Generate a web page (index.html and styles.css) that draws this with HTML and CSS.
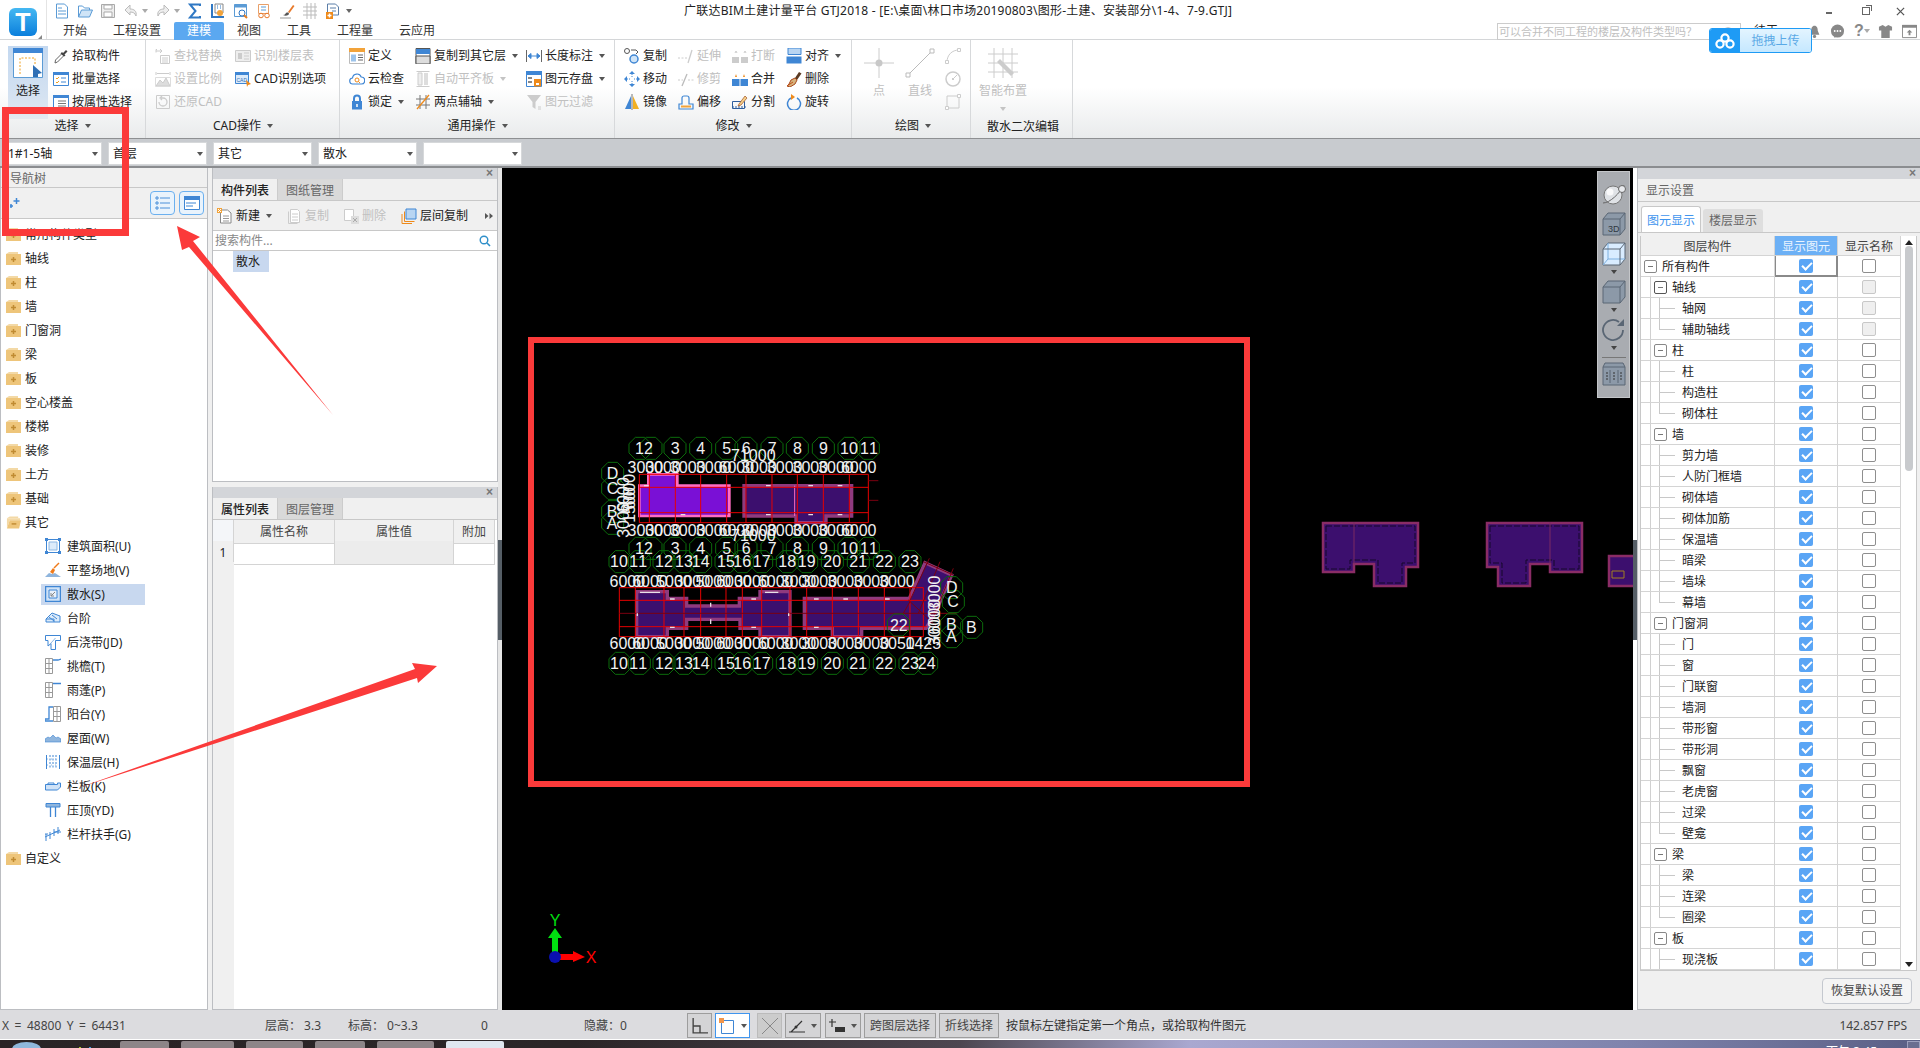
FILE: index.html
```html
<!DOCTYPE html>
<html lang="zh-CN">
<head>
<meta charset="utf-8">
<title>广联达BIM土建计量平台 GTJ2018</title>
<link rel="stylesheet" href="styles.css">
</head>
<body>
<svg class="sprite" aria-hidden="true">
<defs>
<symbol id="qnew" viewBox="0 0 16 16"><path d="M2.5 1h8l3 3v11h-11z" fill="#fff" stroke="#5b9bd5"/><path d="M4 8h8M4 11h8M4 5h4" stroke="#5b9bd5"/></symbol>
<symbol id="qopen" viewBox="0 0 16 16"><path d="M1.5 14V3h4l2 2h5v2" fill="#fff" stroke="#5b9bd5"/><path d="M1.5 14l3-7h11l-3 7z" fill="#cfe4f7" stroke="#5b9bd5"/></symbol>
<symbol id="qsave" viewBox="0 0 16 16"><path d="M1.5 1.5h13v13h-13z" fill="#eee" stroke="#aaa"/><path d="M4 2h8v4H4zM4 9h8v5H4z" fill="#fff" stroke="#aaa"/></symbol>
<symbol id="qundo" viewBox="0 0 16 16"><path d="M7 2L2 7l5 5V9c3 0 5 1 6 4 1-5-2-7-6-7z" fill="#eee" stroke="#bbb"/></symbol>
<symbol id="qredo" viewBox="0 0 16 16"><path d="M9 2l5 5-5 5V9c-3 0-5 1-6 4-1-5 2-7 6-7z" fill="#eee" stroke="#bbb"/></symbol>
<symbol id="qsum" viewBox="0 0 16 16"><path d="M13 3V1.500H3L8.500 8 3 14.500h10V13" fill="none" stroke="#2f78c4" stroke-width="2"/></symbol>
<symbol id="qa" viewBox="0 0 16 16"><path d="M1 15V1h2v12h11v2z" fill="#2f78c4"/><path d="M5 1h8v9H5z" fill="#fff" stroke="#888"/><circle cx="10" cy="10" r="3" fill="#f2a33a"/><path d="M7 3h1M10 3h1M7 5h1M10 5h1" stroke="#2f78c4"/></symbol>
<symbol id="qb" viewBox="0 0 16 16"><path d="M1.500 1.500h12v12h-12z" fill="#fff" stroke="#5b9bd5"/><path d="M1.500 1.500h12v3h-12z" fill="#5b9bd5"/><circle cx="9" cy="10" r="3" fill="#fff" stroke="#2f78c4"/><path d="M11 12l3 3" stroke="#e67e22" stroke-width="2"/></symbol>
<symbol id="qc" viewBox="0 0 16 16"><path d="M2.500 1.500h10v9h-10z" fill="#fff" stroke="#e8a06a"/><path d="M5 4h5M5 7h5" stroke="#5b9bd5"/><circle cx="5" cy="12.500" r="2.300" fill="none" stroke="#e8792a"/><circle cx="11" cy="12.500" r="2.300" fill="none" stroke="#e8792a"/></symbol>
<symbol id="qd" viewBox="0 0 16 16"><path d="M9 9l5-7 1.500 1-5 7z" fill="#e8792a"/><path d="M7 10c2-1 3 0 3 1-1 2-4 2-6 1 2 0 2-1 3-2z" fill="#555"/><path d="M1 15h11" stroke="#999"/></symbol>
<symbol id="qe" viewBox="0 0 16 16"><path d="M1 4h14M1 8h14M1 12h14M5 0v16M9 0v16M13 0v16" stroke="#bbb" fill="none"/></symbol>
<symbol id="qf" viewBox="0 0 16 16"><path d="M2.500 1h8l3 3v8h-11z" fill="#fff" stroke="#5b7ea8"/><path d="M5 5h6M7 8h4" stroke="#5b7ea8"/><path d="M1 9h7v7H1z" fill="#ef8a1a"/><path d="M4.500 10.500v4M2.500 12.500h4" stroke="#fff" stroke-width="1.500"/></symbol>

<symbol id="bigsel" viewBox="0 0 30 30"><path d="M.5.5h29v29H.5z" fill="#fff" stroke="#5b9bd5"/><path d="M0 0h30v5H0z" fill="#3f86d4"/><path d="M7 26V10h15v6" fill="none" stroke="#f0a020" stroke-dasharray="2 1.500"/><path d="M20 17l9 8-4 1v3h-5z" fill="#2f6fb5"/></symbol>
<symbol id="pick" viewBox="0 0 16 16"><path d="M2 15l.5-3L9 5.500 11 7.500 4.500 14z" fill="#fff" stroke="#666"/><path d="M9 4l1 1 3-3 1.500 1.500-3 3 1 1-1.500 1L7.500 5.500z" fill="#444"/></symbol>
<symbol id="batch" viewBox="0 0 16 16"><path d="M.5 1.500h15v13H.5z" fill="#fff" stroke="#3f86d4"/><path d="M0 1h16v3H0z" fill="#3f86d4"/><path d="M3 7l1 1 2-2M3 11l1 1 2-2" fill="none" stroke="#f0a020"/><path d="M8 7h5M8 11h5" stroke="#3f86d4"/></symbol>
<symbol id="attrsel" viewBox="0 0 16 16"><path d="M.5 1.500h15v13H.5z" fill="#fff" stroke="#3f86d4"/><path d="M0 1h16v3H0z" fill="#3f86d4"/><path d="M5 7h8M5 9.500h8M5 12h8" stroke="#777"/></symbol>
<symbol id="dfind" viewBox="0 0 16 16"><path d="M1 3h5M5 1l2 2-2 2M2 1.500h-1v3" stroke="#ccc" fill="none"/><path d="M5.500 7.500h9v8h-9z" fill="#fff" stroke="#ccc"/><path d="M7 10h6M7 12h6M7 14h6" stroke="#ccc"/></symbol>
<symbol id="dscale" viewBox="0 0 16 16"><path d="M1 1v3M15 1v3M2 2.500h12" stroke="#ccc"/><path d="M1 15l4-6 3 3 3-5 4 8z" fill="#ddd" stroke="#ccc"/><path d="M.5 6.500h15v9H.5z" fill="none" stroke="#ddd"/></symbol>
<symbol id="drest" viewBox="0 0 16 16"><path d="M1.500 1.500h13v13h-13z" fill="none" stroke="#ccc"/><path d="M4 8a4 4 0 1 0 4-4H6M7 2L5 4l2 2" fill="none" stroke="#ccc" stroke-width="1.300"/></symbol>
<symbol id="dfloor" viewBox="0 0 16 16"><path d="M.5 2.500h15v11H.5z" fill="#eee" stroke="#ccc"/><path d="M3 5h4v6H3z" fill="#ccc"/><path d="M9 5h5M9 8h5M9 11h5" stroke="#ccc"/></symbol>
<symbol id="cadopt" viewBox="0 0 16 16"><path d="M.5 1.500h13v11H.5z" fill="#dcebfa" stroke="#3f86d4"/><path d="M0 1h14v3H0z" fill="#3f86d4"/><text x="1.500" y="10.500" class="mini">CAD</text><path d="M11 9l5 4-3 1-1 2z" fill="#ef8a1a"/></symbol>
<symbol id="define" viewBox="0 0 16 16"><path d="M.5.500h15v15H.5z" fill="#fff" stroke="#bbb"/><path d="M0 0h16v4H0z" fill="#f2a33a"/><path d="M2 6.500h5v7H2z" fill="#9cc3ea"/><path d="M9 7h5M9 9.500h5M9 12h5" stroke="#666"/></symbol>
<symbol id="cloud" viewBox="0 0 16 16"><path d="M4 13a3 3 0 0 1-.5-6 4.500 4.500 0 0 1 8.700-1 3.500 3.500 0 0 1 0 7z" fill="#fff" stroke="#3f86d4" stroke-width="1.200"/><circle cx="8" cy="9" r="2" fill="none" stroke="#ef8a1a"/><path d="M9.500 10.500l1.500 1.500" stroke="#ef8a1a"/></symbol>
<symbol id="lock" viewBox="0 0 16 16"><path d="M5 8V4.500a3 3 0 0 1 6 0V8" fill="none" stroke="#3f86d4" stroke-width="2"/><path d="M3 7h10v8.500H3z" fill="#3f86d4"/><path d="M8 10v3" stroke="#fff" stroke-width="1.500"/></symbol>
<symbol id="clayer" viewBox="0 0 16 16"><path d="M1 .5h14v15H1z" fill="#fff" stroke="#555"/><path d="M1 1h14v5H1z" fill="#3f86d4"/><path d="M1 8h14v8H1z" fill="#ddd" stroke="#555"/></symbol>
<symbol id="dalign" viewBox="0 0 16 16"><path d="M1.500.5h13M1.500 15.500h13" stroke="#ccc"/><path d="M3 2h4v12H3z" fill="#eee" stroke="#ccc"/><path d="M9 2h4v12H9z" fill="#ddd"/></symbol>
<symbol id="twopt" viewBox="0 0 16 16"><path d="M1 5h14M1 11h14M5 1v14M11 1v14" stroke="#777" fill="none"/><path d="M2 15L14 1" stroke="#ef8a1a" stroke-width="1.300"/></symbol>
<symbol id="dimlen" viewBox="0 0 16 16"><path d="M.5 2v12M15.500 2v12" stroke="#666"/><path d="M2 8h12M2 8l3-2.500v5zM14 8l-3-2.500v5z" fill="#3f86d4" stroke="#3f86d4"/></symbol>
<symbol id="savefig" viewBox="0 0 16 16"><path d="M.5.500h15v15H.5z" fill="#fff" stroke="#3f86d4"/><path d="M0 0h16v4H0z" fill="#3f86d4"/><path d="M2 6h4v2H2zM2 10h4v2H2z" fill="#888"/><path d="M8 8h7v7.500H8z" fill="#ef8a1a"/><path d="M10 12h3v2h-3z" fill="#fff"/></symbol>
<symbol id="dfilter" viewBox="0 0 16 16"><path d="M1 1h14L9.500 8v7l-3-2V8z" fill="#ccc"/><path d="M12 13h3M12 15h3" stroke="#ccc"/></symbol>
<symbol id="copy" viewBox="0 0 16 16"><circle cx="3" cy="3" r="2.500" fill="none" stroke="#555"/><path d="M7 2h5l2 2-2 2" fill="none" stroke="#555"/><circle cx="10" cy="11" r="4" fill="#cfe4f7" stroke="#3f86d4" stroke-width="1.500"/></symbol>
<symbol id="move" viewBox="0 0 16 16"><path d="M8 0l3 3H5zM8 16l-3-3h6zM0 8l3-3v6zM16 8l-3 3V5z" fill="#3f86d4"/><path d="M8 3v3M8 10v3M3 8h3M10 8h3" stroke="#3f86d4" stroke-dasharray="1 1"/></symbol>
<symbol id="mirror" viewBox="0 0 16 16"><path d="M7 2v13H1z" fill="#3f86d4"/><path d="M9 2v13h6z" fill="#f2b022"/><path d="M8 0v16" stroke="#777"/></symbol>
<symbol id="dext" viewBox="0 0 16 16"><path d="M0 10h9" stroke="#ccc" stroke-dasharray="2 1.500"/><path d="M10 15l4-13" stroke="#ccc" stroke-width="1.300"/></symbol>
<symbol id="dtrim" viewBox="0 0 16 16"><path d="M0 9h5M10 9h6" stroke="#ccc" stroke-dasharray="2 1.500"/><path d="M4 15L9 3" stroke="#bbb" stroke-width="1.300"/></symbol>
<symbol id="offset" viewBox="0 0 16 16"><path d="M1 15V10h3V4a2 2 0 0 1 2-2h3a2 2 0 0 1 2 2v6h4v5z" fill="none" stroke="#3f86d4" stroke-width="1.200"/><path d="M3 12.500h10" stroke="#f2a33a" stroke-width="2"/></symbol>
<symbol id="dbreak" viewBox="0 0 16 16"><path d="M0 9h7v6H0zM9 9h7v6H9z" fill="#ccc"/><path d="M3 5l1-2 1 2M12 5l1-2 1 2" fill="none" stroke="#ccc"/></symbol>
<symbol id="merge" viewBox="0 0 16 16"><path d="M0 8h7.500v7H0zM8.500 8H16v7H8.500z" fill="#3f86d4"/><path d="M3 6l1-3 1 3zM11 6l1-3 1 3z" fill="#ef8a1a"/></symbol>
<symbol id="split" viewBox="0 0 16 16"><path d="M.5 7.500h12v7H.5z" fill="none" stroke="#2f5e9e"/><path d="M0 13h14" stroke="#2f5e9e" stroke-dasharray="2 1"/><path d="M7 10l6-8 2 2-6 7-3 1z" fill="#f5d08a" stroke="#a05020" stroke-width=".700"/></symbol>
<symbol id="align" viewBox="0 0 16 16"><path d="M2 0h13v6.500H2z" fill="#b8d5f2" stroke="#3f86d4"/><path d="M.5 8.500h15v7H.5z" fill="#3f86d4"/></symbol>
<symbol id="del" viewBox="0 0 16 16"><path d="M9 7l4-6 2.500 1.500L11 9z" fill="#5b3a22"/><path d="M5 9l4-2 2 2-2 4-5 3-3-1 2-2z" fill="#d6b37c" stroke="#a8481c"/><path d="M1 15l6-4" stroke="#c2521a"/></symbol>
<symbol id="rotate" viewBox="0 0 16 16"><path d="M5 4a6.500 6.500 0 1 0 6 0" fill="none" stroke="#3f86d4" stroke-width="1.500"/><path d="M5 0l4 3-4 3z" fill="#ef8a1a"/></symbol>
<symbol id="dpoint" viewBox="0 0 30 30"><path d="M15 0v30M0 15h30" stroke="#ccc"/><circle cx="15" cy="15" r="3.500" fill="#c8c8c8"/></symbol>
<symbol id="dline" viewBox="0 0 30 30"><path d="M3 27L27 3" stroke="#bbb"/><path d="M1 25h4v4H1zM25 1h4v4h-4z" fill="#fff" stroke="#bbb"/></symbol>
<symbol id="darc" viewBox="0 0 16 16"><path d="M2 14C2 7 7 2 14 2" fill="none" stroke="#ccc"/><path d="M.5 12.500h3v3h-3zM12.500.500h3v3h-3z" fill="#fff" stroke="#ccc"/></symbol>
<symbol id="dcirc" viewBox="0 0 16 16"><circle cx="8" cy="8" r="7" fill="none" stroke="#ccc" stroke-width="1.500"/><path d="M8 8l4-4" stroke="#ccc"/><rect x="7" y="7" width="2" height="2" fill="#ccc"/></symbol>
<symbol id="drect" viewBox="0 0 16 16"><path d="M2 2h12v12H2z" fill="none" stroke="#ccc"/><path d="M.5 12.500h3v3h-3zM12.500.500h3v3h-3z" fill="#fff" stroke="#ccc"/></symbol>
<symbol id="dsmart" viewBox="0 0 30 30"><path d="M0 6h30M0 15h30M0 24h30M6 0v30M15 0v30M24 0v30" stroke="#ccc" fill="none"/><path d="M12 11l14 14-3 3L9 14z" fill="#ccc"/></symbol>

<symbol id="fplus" viewBox="0 0 15 15"><path d="M0 3l3-2h9v2z" fill="#f3d9a6"/><path d="M0 3h15v11H0z" fill="#eec57a"/><path d="M7.500 6v5M5 8.500h5" stroke="#c08b32" stroke-width="1.500"/></symbol>
<symbol id="fminus" viewBox="0 0 16 15"><path d="M1 3l3-2h9v2z" fill="#f3d9a6"/><path d="M1 3h14v2H4L1 14z" fill="#f3d9a6"/><path d="M4 5h12l-2 9H1z" fill="#eec57a"/><path d="M6 9h5" stroke="#c08b32" stroke-width="1.500"/></symbol>

<symbol id="n1" viewBox="0 0 16 16"><path d="M1.500 1.500h13v13h-13z" fill="none" stroke="#3f86d4"/><path d="M4 4h8v8H4z" fill="#dcebfa" stroke="#8db8e4"/><path d="M0 0h3v3H0zM13 0h3v3h-3zM0 13h3v3H0zM13 13h3v3h-3z" fill="#3f86d4"/></symbol>
<symbol id="n2" viewBox="0 0 16 16"><path d="M0 15l4-4 3 1 3-1 6 4z" fill="#8fb5dd"/><path d="M5 10l3-4 2 2-2 4z" fill="#ef7a1a"/><path d="M9 6l5-5" stroke="#ef7a1a" stroke-width="1.500"/></symbol>
<symbol id="n3" viewBox="0 0 16 16"><path d="M.5.500h15v15H.5z" fill="#cfe2f7" stroke="#3f86d4" stroke-width="1.500"/><path d="M4 4h8v8H4z" fill="#e8f1fb" stroke="#3f86d4"/><path d="M10 6l-4 4M6 7v3h3" stroke="#888" fill="none"/></symbol>
<symbol id="n4" viewBox="0 0 16 16"><path d="M1 9l6-6 8 3v6H1z" fill="#dcebfa" stroke="#3f86d4"/><path d="M4 7l5 4M7 5l5 4M1 9h8v3" fill="none" stroke="#3f86d4"/></symbol>
<symbol id="n5" viewBox="0 0 16 16"><path d="M.5 1.500h15v5h-5v9H6v-6L3 12V6.500H.5z" fill="#fff" stroke="#3f86d4"/><path d="M6 9l4.500-5" stroke="#8db8e4"/></symbol>
<symbol id="n6" viewBox="0 0 16 16"><path d="M.5.500h7v15h-7zM.5 5.500h7M.5 10.500h7M4 .5v15" fill="none" stroke="#999"/><path d="M8 2h5l3-1" fill="none" stroke="#3f86d4" stroke-width="1.300"/></symbol>
<symbol id="n7" viewBox="0 0 16 16"><path d="M.5.500h7v15h-7zM.5 5.500h7M.5 10.500h7M4 .5v15" fill="none" stroke="#999"/><path d="M8 1.500h8" fill="none" stroke="#3f86d4" stroke-width="1.500"/></symbol>
<symbol id="n8" viewBox="0 0 16 16"><path d="M8.500.500h7v15h-7zM8.500 5.500h7M8.500 10.500h7M12 .5v15" fill="none" stroke="#999"/><path d="M8 1H4v12H0v2h8" fill="none" stroke="#3f86d4" stroke-width="1.300"/></symbol>
<symbol id="n9" viewBox="0 0 16 16"><path d="M0 9l3-2 2 1 3-3 3 3 2-1 3 2v3H0z" fill="#8fb5dd" stroke="#3f86d4" stroke-width=".600"/></symbol>
<symbol id="n10" viewBox="0 0 16 16"><path d="M1.500 1v14M14.500 1v14" stroke="#3f86d4"/><path d="M5 1v14M8 1v14M11 1v14" stroke="#3f86d4" stroke-dasharray="2 1.500"/><path d="M2 5h12M2 11h12" stroke="#8db8e4" stroke-dasharray="1 3"/></symbol>
<symbol id="n11" viewBox="0 0 16 16"><path d="M.5 6.500h12V5h3v4l-3 3H.5z" fill="#cfe2f7" stroke="#3f86d4"/><path d="M3 6.500V5h6v1.500" stroke="#3f86d4" fill="none"/></symbol>
<symbol id="n12" viewBox="0 0 16 16"><path d="M1 1.500h14v3.500H1z" fill="#8fb5dd" stroke="#3f86d4"/><path d="M5.500 5v10M10.500 5v10" stroke="#3f86d4" stroke-width="1.300"/></symbol>
<symbol id="n13" viewBox="0 0 16 16"><path d="M1 15V8M5 13V6M9 10V3M13 8V1M0 11l15-7" fill="none" stroke="#3f86d4"/><path d="M9 6h7M0 8h3" stroke="#3f86d4"/></symbol>

<symbol id="tnew" viewBox="0 0 16 16"><path d="M3.500 2h7l3.500 3v10H3.500z" fill="#fff" stroke="#888"/><path d="M6 8h6M6 10.500h6M6 13h6" stroke="#999"/><path d="M0 0h5v5H0z" fill="#f2a33a"/><path d="M1 1l3 3M4 1L1 4" stroke="#fff"/></symbol>
<symbol id="tcopy" viewBox="0 0 16 16"><path d="M4.500 1.500h7l2 2v11h-9z" fill="#fff" stroke="#ccc"/><path d="M2.500 3.500v12h9" fill="none" stroke="#ccc"/><path d="M6 6h6M6 9h6M6 12h6" stroke="#ccc"/></symbol>
<symbol id="tdel" viewBox="0 0 16 16"><path d="M1.500 1.500h9v11h-9z" fill="#fff" stroke="#ccc"/><path d="M8 8h8v8H8z" fill="#ddd"/><path d="M10 10l4 4M14 10l-4 4" stroke="#aaa"/></symbol>
<symbol id="tlayer" viewBox="0 0 16 16"><path d="M5 1h10v10H5z" fill="#b8d5f2" stroke="#3f86d4"/><path d="M3.500 3.500v10h10M1 6v9.500h10" fill="none" stroke="#ef8a1a"/></symbol>

<symbol id="vglobe" viewBox="0 0 24 24"><circle cx="11" cy="13" r="9" fill="#dfe2e6" stroke="#777"/><circle cx="8" cy="10" r="3.500" fill="#fff" opacity=".8"/><path d="M1 21C8 21 18 11 22 3" fill="none" stroke="#666"/><circle cx="20" cy="7" r="3.500" fill="#e8eaee" stroke="#666"/></symbol>
<symbol id="v3d" viewBox="0 0 24 24"><path d="M1 7l5-6h17v16l-5 6H1z" fill="#8c99a8" stroke="#5a6674"/><path d="M1 7h17v16M18 7l5-6" fill="none" stroke="#5a6674"/><text x="6" y="20" class="mini3">3D</text></symbol>
<symbol id="vbox" viewBox="0 0 24 24"><path d="M1 7l5-6h17v16l-5 6H1z" fill="#d9ecff" stroke="#5a6674"/><path d="M6 1v16h17M6 17l-5 6" fill="none" stroke="#7db0e0"/><path d="M1 7h17v16M18 7l5-6" fill="none" stroke="#5a6674"/></symbol>
<symbol id="vcube" viewBox="0 0 24 24"><path d="M1 7l5-6h17v16l-5 6H1z" fill="#8c99a8" stroke="#5a6674"/><path d="M1 7h17v16M18 7l5-6" fill="none" stroke="#5a6674"/></symbol>
<symbol id="vrot" viewBox="0 0 24 24"><path d="M21 12a10 10 0 1 1-4-8" fill="none" stroke="#5a6674" stroke-width="1.800"/><path d="M22 1v7h-7z" fill="#5a6674"/></symbol>
<symbol id="vtab" viewBox="0 0 24 24"><path d="M1 5l2-4h18l2 4v18H1z" fill="#8c99a8" stroke="#5a6674"/><path d="M1 5h22M8 8v13M16 8v13" stroke="#5a6674"/><path d="M4 11h2M4 14h2M4 17h2M11 11h2M11 14h2M11 17h2M18 11h2M18 14h2M18 17h2" stroke="#333"/></symbol>
</defs>
</svg>

<header class="top">
  <div class="logo"><span class="logo-t">T</span><i class="logo-tri"></i></div>
  <div class="top-main">
    <div class="qbar">
      <svg class="q q1"><use href="#qnew"/></svg><svg class="q"><use href="#qopen"/></svg><svg class="q"><use href="#qsave"/></svg><svg class="q"><use href="#qundo"/></svg><i class="caret q-c"></i><svg class="q"><use href="#qredo"/></svg><i class="caret q-c"></i><svg class="q"><use href="#qsum"/></svg><svg class="q"><use href="#qa"/></svg><svg class="q"><use href="#qb"/></svg><svg class="q"><use href="#qc"/></svg><svg class="q"><use href="#qd"/></svg><svg class="q"><use href="#qe"/></svg><svg class="q"><use href="#qf"/></svg><i class="caret q-c2"></i>
      <div class="wintitle">广联达BIM土建计量平台 GTJ2018 - [E:\桌面\林口市场20190803\图形-土建、安装部分\1-4、7-9.GTJ]</div>
      <div class="winctl">
        <span class="w-min"></span><span class="w-res"></span>
        <svg class="w-x" viewBox="0 0 10 10"><path d="M1 1l8 8M9 1L1 9" stroke="#555" stroke-width="1.400"/></svg>
      </div>
    </div>
    <div class="tabrow">
      <span class="tab">开始</span><span class="tab">工程设置</span><span class="tab tab-on">建模</span><span class="tab">视图</span><span class="tab">工具</span><span class="tab">工程量</span><span class="tab">云应用</span>
      <div class="helpbar">
        <div class="search"><span>可以合并不同工程的楼层及构件类型吗？</span><svg class="s-mag" viewBox="0 0 12 12"><circle cx="5.500" cy="5.500" r="4" fill="none" stroke="#c8c8c8"/><path d="M8.500 8.500l3 3" stroke="#c8c8c8"/></svg></div>
        <span class="user">待王</span>
        <svg class="h-i h-bell" viewBox="0 0 16 16"><path d="M8 1c3 0 4 3 4 6l2 5H2l2-5c0-3 1-6 4-6z" fill="#888"/><circle cx="8" cy="14" r="2" fill="#888"/></svg>
        <svg class="h-i" viewBox="0 0 16 16"><circle cx="8" cy="7.500" r="7" fill="#888"/><path d="M5 15l2-3h-3z" fill="#888"/><circle cx="5" cy="7.500" r="1" fill="#fff"/><circle cx="8" cy="7.500" r="1" fill="#fff"/><circle cx="11" cy="7.500" r="1" fill="#fff"/></svg>
        <span class="h-q">?</span><i class="caret h-c"></i>
        <svg class="h-i" viewBox="0 0 16 16"><path d="M5 1L1 3v4h2.500v8h9V7H15V3l-4-2-3 2z" fill="#888"/></svg>
        <svg class="h-i h-last" viewBox="0 0 16 16"><path d="M.5 1.500h15v13H.5z" fill="#fff" stroke="#888"/><path d="M0 1h16v3H0z" fill="#888"/><path d="M8 6l3 3H9v3H7V9H5z" fill="#888"/></svg>
      </div>
    </div>
  </div>
</header>

<section class="ribbon">
  <div class="grp g-sel">
    <div class="g-body">
      <div class="bigsel"><svg class="bs-i"><use href="#bigsel"/></svg><span>选择</span></div>
      <div class="col c-sel">
        <div class="rb"><svg class="ri"><use href="#pick"/></svg>拾取构件</div>
        <div class="rb"><svg class="ri"><use href="#batch"/></svg>批量选择</div>
        <div class="rb"><svg class="ri"><use href="#attrsel"/></svg>按属性选择</div>
      </div>
    </div>
    <div class="g-label">选择<i class="caret"></i></div>
  </div>
  <div class="grp g-cad">
    <div class="g-body">
      <div class="col c80">
        <div class="rb off"><svg class="ri"><use href="#dfind"/></svg>查找替换</div>
        <div class="rb off"><svg class="ri"><use href="#dscale"/></svg>设置比例</div>
        <div class="rb off"><svg class="ri"><use href="#drest"/></svg>还原CAD</div>
      </div>
      <div class="col">
        <div class="rb off"><svg class="ri"><use href="#dfloor"/></svg>识别楼层表</div>
        <div class="rb"><svg class="ri"><use href="#cadopt"/></svg>CAD识别选项</div>
      </div>
    </div>
    <div class="g-label">CAD操作<i class="caret"></i></div>
  </div>
  <div class="grp g-gen">
    <div class="g-body">
      <div class="col c66">
        <div class="rb"><svg class="ri"><use href="#define"/></svg>定义</div>
        <div class="rb"><svg class="ri"><use href="#cloud"/></svg>云检查</div>
        <div class="rb"><svg class="ri"><use href="#lock"/></svg>锁定<i class="caret"></i></div>
      </div>
      <div class="col c111">
        <div class="rb"><svg class="ri"><use href="#clayer"/></svg>复制到其它层<i class="caret"></i></div>
        <div class="rb off"><svg class="ri"><use href="#dalign"/></svg>自动平齐板<i class="caret caret-off"></i></div>
        <div class="rb"><svg class="ri"><use href="#twopt"/></svg>两点辅轴<i class="caret"></i></div>
      </div>
      <div class="col">
        <div class="rb"><svg class="ri"><use href="#dimlen"/></svg>长度标注<i class="caret"></i></div>
        <div class="rb"><svg class="ri"><use href="#savefig"/></svg>图元存盘<i class="caret"></i></div>
        <div class="rb off"><svg class="ri"><use href="#dfilter"/></svg>图元过滤</div>
      </div>
    </div>
    <div class="g-label">通用操作<i class="caret"></i></div>
  </div>
  <div class="grp g-mod">
    <div class="g-body">
      <div class="col c54">
        <div class="rb"><svg class="ri"><use href="#copy"/></svg>复制</div>
        <div class="rb"><svg class="ri"><use href="#move"/></svg>移动</div>
        <div class="rb"><svg class="ri"><use href="#mirror"/></svg>镜像</div>
      </div>
      <div class="col c54">
        <div class="rb off"><svg class="ri"><use href="#dext"/></svg>延伸</div>
        <div class="rb off"><svg class="ri"><use href="#dtrim"/></svg>修剪</div>
        <div class="rb"><svg class="ri"><use href="#offset"/></svg>偏移</div>
      </div>
      <div class="col c54">
        <div class="rb off"><svg class="ri"><use href="#dbreak"/></svg>打断</div>
        <div class="rb"><svg class="ri"><use href="#merge"/></svg>合并</div>
        <div class="rb"><svg class="ri"><use href="#split"/></svg>分割</div>
      </div>
      <div class="col">
        <div class="rb"><svg class="ri"><use href="#align"/></svg>对齐<i class="caret"></i></div>
        <div class="rb"><svg class="ri"><use href="#del"/></svg>删除</div>
        <div class="rb"><svg class="ri"><use href="#rotate"/></svg>旋转</div>
      </div>
    </div>
    <div class="g-label">修改<i class="caret"></i></div>
  </div>
  <div class="grp g-draw">
    <div class="g-body">
      <div class="bigd d-pt off"><svg class="di"><use href="#dpoint"/></svg><span>点</span></div>
      <div class="bigd d-ln off"><svg class="di"><use href="#dline"/></svg><span>直线</span></div>
      <div class="col d-sm">
        <div class="rb"><svg class="ri"><use href="#darc"/></svg></div>
        <div class="rb"><svg class="ri"><use href="#dcirc"/></svg></div>
        <div class="rb"><svg class="ri"><use href="#drect"/></svg></div>
      </div>
    </div>
    <div class="g-label">绘图<i class="caret"></i></div>
  </div>
  <div class="grp g-smart">
    <div class="g-body">
      <div class="bigd d-sm2 off"><svg class="di"><use href="#dsmart"/></svg><span>智能布置</span><i class="caret caret-off d-c"></i></div>
    </div>
    <div class="g-label">散水二次编辑</div>
  </div>
</section>

<section class="filters">
  <div class="combo">1#1-5轴<i class="caret"></i></div>
  <div class="combo">首层<i class="caret"></i></div>
  <div class="combo">其它<i class="caret"></i></div>
  <div class="combo">散水<i class="caret"></i></div>
  <div class="combo"><i class="caret"></i></div>
</section>

<main class="main">
  <aside class="nav">
    <div class="nav-h">导航树</div>
    <div class="nav-t">
      <svg class="nav-plus" viewBox="0 0 10 10"><path d="M6.500 0v6M3.500 3h6M1 6v4M0 8h3" stroke="#3f86d4" stroke-width="1.500"/></svg>
      <span class="nbtn"><svg viewBox="0 0 16 16"><path d="M1 2h2v2H1zM1 7h2v2H1zM1 12h2v2H1z" fill="none" stroke="#4a90d9"/><path d="M5 3h10M5 8h10M5 13h10" stroke="#4a90d9"/></svg></span>
      <span class="nbtn"><svg viewBox="0 0 16 16"><path d="M.5 1.500h15v13H.5z" fill="#fff" stroke="#3f86d4"/><path d="M0 1h16v4H0z" fill="#3f86d4"/><path d="M2 8h10M2 11h7" stroke="#3f86d4"/></svg></span>
    </div>
    <div class="tree">
      <div class="nr"><svg class="fo"><use href="#fplus"/></svg>常用构件类型</div>
      <div class="nr"><svg class="fo"><use href="#fplus"/></svg>轴线</div>
      <div class="nr"><svg class="fo"><use href="#fplus"/></svg>柱</div>
      <div class="nr"><svg class="fo"><use href="#fplus"/></svg>墙</div>
      <div class="nr"><svg class="fo"><use href="#fplus"/></svg>门窗洞</div>
      <div class="nr"><svg class="fo"><use href="#fplus"/></svg>梁</div>
      <div class="nr"><svg class="fo"><use href="#fplus"/></svg>板</div>
      <div class="nr"><svg class="fo"><use href="#fplus"/></svg>空心楼盖</div>
      <div class="nr"><svg class="fo"><use href="#fplus"/></svg>楼梯</div>
      <div class="nr"><svg class="fo"><use href="#fplus"/></svg>装修</div>
      <div class="nr"><svg class="fo"><use href="#fplus"/></svg>土方</div>
      <div class="nr"><svg class="fo"><use href="#fplus"/></svg>基础</div>
      <div class="nr"><svg class="fo"><use href="#fminus"/></svg>其它</div>
      <div class="nr ch"><span class="chi"><svg class="nci"><use href="#n1"/></svg>建筑面积(U)</span></div>
      <div class="nr ch"><span class="chi"><svg class="nci"><use href="#n2"/></svg>平整场地(V)</span></div>
      <div class="nr ch"><span class="chi sel"><svg class="nci"><use href="#n3"/></svg>散水(S)</span></div>
      <div class="nr ch"><span class="chi"><svg class="nci"><use href="#n4"/></svg>台阶</span></div>
      <div class="nr ch"><span class="chi"><svg class="nci"><use href="#n5"/></svg>后浇带(JD)</span></div>
      <div class="nr ch"><span class="chi"><svg class="nci"><use href="#n6"/></svg>挑檐(T)</span></div>
      <div class="nr ch"><span class="chi"><svg class="nci"><use href="#n7"/></svg>雨蓬(P)</span></div>
      <div class="nr ch"><span class="chi"><svg class="nci"><use href="#n8"/></svg>阳台(Y)</span></div>
      <div class="nr ch"><span class="chi"><svg class="nci"><use href="#n9"/></svg>屋面(W)</span></div>
      <div class="nr ch"><span class="chi"><svg class="nci"><use href="#n10"/></svg>保温层(H)</span></div>
      <div class="nr ch"><span class="chi"><svg class="nci"><use href="#n11"/></svg>栏板(K)</span></div>
      <div class="nr ch"><span class="chi"><svg class="nci"><use href="#n12"/></svg>压顶(YD)</span></div>
      <div class="nr ch"><span class="chi"><svg class="nci"><use href="#n13"/></svg>栏杆扶手(G)</span></div>
      <div class="nr"><svg class="fo"><use href="#fplus"/></svg>自定义</div>
    </div>
  </aside>

  <div class="mid">
    <div class="mp mp-a">
      <div class="mp-bar"><span class="xx">×</span></div>
      <div class="mp-tabs"><span class="mt mt-on">构件列表</span><span class="mt">图纸管理</span></div>
      <div class="mp-tool">
        <span class="ti t1"><svg class="ri"><use href="#tnew"/></svg>新建<i class="caret"></i></span>
        <span class="ti t2 off"><svg class="ri"><use href="#tcopy"/></svg>复制</span>
        <span class="ti t3 off"><svg class="ri"><use href="#tdel"/></svg>删除</span>
        <span class="ti t4"><svg class="ri"><use href="#tlayer"/></svg>层间复制</span>
        <svg class="more" viewBox="0 0 8 8"><path d="M0 1l3.500 3L0 7zM4.500 1L8 4 4.500 7z" fill="#555"/></svg>
      </div>
      <div class="mp-search">搜索构件...<svg class="mag" viewBox="0 0 12 12"><circle cx="5" cy="5" r="3.800" fill="none" stroke="#2f8fc9" stroke-width="1.400"/><path d="M8 8l3 3" stroke="#2f8fc9" stroke-width="1.600"/></svg></div>
      <div class="mp-list"><span class="li-sel">散水</span></div>
    </div>
    <div class="mp mp-b">
      <div class="mp-bar"><span class="xx">×</span></div>
      <div class="mp-tabs"><span class="mt mt-on">属性列表</span><span class="mt">图层管理</span></div>
      <div class="pt">
        <div class="pt-row pt-head"><span></span><span>属性名称</span><span>属性值</span><span>附加</span></div>
        <div class="pt-row pt-one"><span>1</span><span></span><span class="pt-g"></span><span></span></div>
        <div class="pt-rest"><span></span></div>
      </div>
    </div>
  </div>

  <div class="split"><i class="split-h"></i></div>

  <div class="canvas">
    <svg class="cad" viewBox="502 168 1131 842" preserveAspectRatio="none">
      <defs>
        <polygon id="b" points="-14,-33 14,-33 33,-14 33,14 14,33 -14,33 -33,14 -33,-14" fill="none" stroke="#0b6b0b" stroke-width="3"/>
      </defs>
      <g transform="translate(590 420) scale(.33333)">
        <path class="b-hi" d="M148 197H175V163H262V197H418V288H148z"/>
        <path class="b-lo" d="M462 197H785V288H708V308H618V288H462z"/>
        <path class="b-lo" d="M140 515H232V535H290V558H448V535H510V515H600V650H510V625H450V598H290V625H232V650H140z"/>
        <path class="b-lo" d="M643 535H958L1005 428 1085 465 1040 570 1008 625H815V650H727V625H643z"/>
        <path class="hi-line" d="M614 197V288"/>
        <path class="grid" d="M148 163H835V308H148zM148 202H835M148 278H835M178 163V308M256 163V308M332 163V308M410 163V308M468 163V308M546 163V308M622 163V308M700 163V308M778 163V308"/>
        <path class="grid" d="M88 503H1000V650H88zM88 541H1010M88 620H1010M136 503V650M222 503V650M282 503V650M332 503V650M408 503V650M457 503V650M515 503V650M600 503V650M650 503V650M727 503V650M805 503V650M883 503V650M960 503V650"/>
        <path class="grid-d" d="M835 182H865M835 241H865M88 580H1100M960 541L1018 415M985 580L1050 425M1030 590L1090 445M955 540L1040 620M1000 425L1090 465M940 580L960 545"/>
        <path class="wh-dots" d="M528 197h14M528 284h14M655 197h14M655 284h14M743 197h14M743 284h14M162 197h14M272 284h14M150 517h60M240 537h14M240 622h14M362 548v12M362 598v14M484 537h14M484 622h14M525 517h40M672 537h14M672 622h14M760 537h14M885 537h14M142 580v8M596 580v8"/>
        <g>
          <use href="#b" x="150" y="85"/><use href="#b" x="183" y="85"/><use href="#b" x="255" y="85"/><use href="#b" x="332" y="85"/><use href="#b" x="410" y="85"/><use href="#b" x="468" y="85"/><use href="#b" x="546" y="85"/><use href="#b" x="622" y="85"/><use href="#b" x="700" y="85"/><use href="#b" x="777" y="85"/><use href="#b" x="835" y="85"/>
          <use href="#b" x="150" y="385"/><use href="#b" x="183" y="385"/><use href="#b" x="255" y="385"/><use href="#b" x="332" y="385"/><use href="#b" x="410" y="385"/><use href="#b" x="468" y="385"/><use href="#b" x="546" y="385"/><use href="#b" x="622" y="385"/><use href="#b" x="700" y="385"/><use href="#b" x="777" y="385"/><use href="#b" x="835" y="385"/>
          <use href="#b" x="68" y="160"/><use href="#b" x="68" y="205"/><use href="#b" x="68" y="275"/><use href="#b" x="68" y="310"/>
          <use href="#b" x="90" y="425"/><use href="#b" x="148" y="425"/><use href="#b" x="222" y="425"/><use href="#b" x="282" y="425"/><use href="#b" x="332" y="425"/><use href="#b" x="408" y="425"/><use href="#b" x="457" y="425"/><use href="#b" x="515" y="425"/><use href="#b" x="592" y="425"/><use href="#b" x="650" y="425"/><use href="#b" x="727" y="425"/><use href="#b" x="805" y="425"/><use href="#b" x="883" y="425"/><use href="#b" x="960" y="425"/>
          <use href="#b" x="90" y="730"/><use href="#b" x="148" y="730"/><use href="#b" x="222" y="730"/><use href="#b" x="282" y="730"/><use href="#b" x="332" y="730"/><use href="#b" x="408" y="730"/><use href="#b" x="457" y="730"/><use href="#b" x="515" y="730"/><use href="#b" x="592" y="730"/><use href="#b" x="650" y="730"/><use href="#b" x="727" y="730"/><use href="#b" x="805" y="730"/><use href="#b" x="883" y="730"/><use href="#b" x="960" y="730"/><use href="#b" x="1010" y="730"/>
          <use href="#b" x="1085" y="503"/><use href="#b" x="1090" y="545"/><use href="#b" x="1085" y="615"/><use href="#b" x="1145" y="622"/><use href="#b" x="1085" y="650"/><use href="#b" x="925" y="615"/>
        </g>
        <g class="t">
          <text y="102" x="135 162 242 319 397 455 533 609 687 750 777 810 837">1234567891011</text>
          <text y="402" x="135 162 242 319 397 455 533 609 687 750 777 810 837">1234567891011</text>
          <text x="50 50 50 50" y="176 221 291 327">DCBA</text>
          <text y="442" x="60 87 118 145 195 222 255 282 305 332 381 408 430 457 488 515 565 592 623 650 700 727 778 805 856 883 933 960">1011121314151617181920212223</text>
          <text y="747" x="60 87 118 145 195 222 255 282 305 332 381 408 430 457 488 515 565 592 623 650 700 727 778 805 856 883 933 960 983 1010">101112131415161718192021222324</text>
          <text x="1128" y="640">B</text><text x="1068" y="520">D</text><text x="1072" y="562">C</text><text x="1068" y="630">B</text><text x="1068" y="667">A</text><text x="900" y="632">22</text>
          <text class="m" x="166" y="160">3000</text><text class="m" x="219" y="160">3000</text><text class="m" x="293" y="160">3000</text><text class="m" x="371" y="160">3000</text><text class="m" x="439" y="160">6000</text><text class="m" x="507" y="160">3000</text><text class="m" x="584" y="160">3000</text><text class="m" x="661" y="160">3000</text><text class="m" x="738" y="160">3000</text><text class="m" x="806" y="160">6000</text>
          <text class="m" x="166" y="349">3000</text><text class="m" x="219" y="349">3000</text><text class="m" x="293" y="349">3000</text><text class="m" x="371" y="349">3000</text><text class="m" x="439" y="349">6000</text><text class="m" x="507" y="349">3000</text><text class="m" x="584" y="349">3000</text><text class="m" x="661" y="349">3000</text><text class="m" x="738" y="349">3000</text><text class="m" x="806" y="349">6000</text>
          <text class="m" x="490" y="124">71000</text><text class="m" x="490" y="364">71000</text>
          <text class="m" x="112" y="500">6000</text><text class="m" x="180" y="500">6000</text><text class="m" x="252" y="500">5000</text><text class="m" x="307" y="500">3000</text><text class="m" x="370" y="500">5000</text><text class="m" x="432" y="500">6000</text><text class="m" x="486" y="500">3000</text><text class="m" x="557" y="500">6000</text><text class="m" x="625" y="500">3000</text><text class="m" x="688" y="500">3000</text><text class="m" x="766" y="500">3000</text><text class="m" x="844" y="500">3000</text><text class="m" x="921" y="500">3000</text>
          <text class="m" x="112" y="687">6000</text><text class="m" x="180" y="687">6000</text><text class="m" x="252" y="687">5000</text><text class="m" x="307" y="687">3000</text><text class="m" x="370" y="687">5000</text><text class="m" x="432" y="687">6000</text><text class="m" x="486" y="687">3000</text><text class="m" x="557" y="687">6000</text><text class="m" x="625" y="687">3000</text><text class="m" x="688" y="687">3000</text><text class="m" x="766" y="687">3000</text><text class="m" x="844" y="687">3000</text><text class="m" x="921" y="687">3050</text><text class="m" x="1000" y="687">1425</text>
          <text class="m" transform="translate(135 215) rotate(-90)">6000</text><text class="m" transform="translate(135 255) rotate(-90)">1500</text><text class="m" transform="translate(118 300) rotate(-90)">3000</text><text class="m" transform="translate(118 225) rotate(-90)">6000</text>
          <text class="m" transform="translate(1050 520) rotate(-90)">3000</text><text class="m" transform="translate(1050 590) rotate(-90)">6000</text><text class="m" transform="translate(1050 625) rotate(-90)">3000</text>
        </g>
      </g>
      <path class="b-far" d="M1323 523H1418V567H1406V586H1374V564H1354V572H1323z"/>
      <path class="b-far" d="M1487 523H1582V572H1550V564H1530V586H1498V567H1487z"/>
      <path class="b-far" d="M1609 556H1635V586H1609z"/>
      <path class="b-dash" d="M1326 526H1415V563H1402V583H1378V560H1350V569H1326z"/>
      <path class="b-dash" d="M1490 526H1579V569H1554V560H1526V583H1502V563H1490z"/>
      <path class="b-in" d="M1354 522V564M1550 522V564"/>
      <path class="b-ye" d="M1612 571H1624V578H1612z"/>
      <path class="ax-g" d="M552 957V938H548L555 928 562 938H558V957z"/>
      <path class="ax-r" d="M555 954H573V951L585 957 573 962V960H555z"/>
      <circle class="ax-b" cx="555" cy="957" r="6"/>
      <text class="ax-y" x="555" y="926">Y</text>
      <text class="ax-x" x="591" y="963">X</text>
    </svg>
    <div class="vtools">
      <svg class="vi"><use href="#vglobe"/></svg>
      <svg class="vi"><use href="#v3d"/></svg>
      <svg class="vi"><use href="#vbox"/></svg><i class="caret v-c"></i>
      <svg class="vi"><use href="#vcube"/></svg><i class="caret v-c"></i>
      <svg class="vi"><use href="#vrot"/></svg><i class="caret v-c"></i>
      <i class="v-sep"></i>
      <svg class="vi"><use href="#vtab"/></svg>
    </div>
  </div>

  <div class="split split-w"><i class="split-h"></i></div>

  <aside class="rp">
    <div class="mp-bar"><span class="xx">×</span></div>
    <div class="rp-title">显示设置</div>
    <div class="rp-tabs"><span class="rt rt-on">图元显示</span><span class="rt">楼层显示</span></div>
    <div class="lt-wrap">
      <div class="lt">
        <div class="tr th"><div class="tc">图层构件</div><div class="tc hb">显示图元</div><div class="tc">显示名称</div></div>
        <div class="tr"><div class="tc l0"><i class="ex"></i>所有构件</div><div class="tc ck cur"><i class="cb"></i></div><div class="tc ck"><i class="ncb"></i></div></div>
        <div class="tr"><div class="tc l1"><i class="ex ex-d"></i>轴线</div><div class="tc ck"><i class="cb"></i></div><div class="tc ck"><i class="ncb dis"></i></div></div>
        <div class="tr"><div class="tc l2">轴网</div><div class="tc ck"><i class="cb"></i></div><div class="tc ck"><i class="ncb dis"></i></div></div>
        <div class="tr"><div class="tc l2 e">辅助轴线</div><div class="tc ck"><i class="cb"></i></div><div class="tc ck"><i class="ncb dis"></i></div></div>
        <div class="tr"><div class="tc l1"><i class="ex"></i>柱</div><div class="tc ck"><i class="cb"></i></div><div class="tc ck"><i class="ncb"></i></div></div>
        <div class="tr"><div class="tc l2">柱</div><div class="tc ck"><i class="cb"></i></div><div class="tc ck"><i class="ncb"></i></div></div>
        <div class="tr"><div class="tc l2">构造柱</div><div class="tc ck"><i class="cb"></i></div><div class="tc ck"><i class="ncb"></i></div></div>
        <div class="tr"><div class="tc l2 e">砌体柱</div><div class="tc ck"><i class="cb"></i></div><div class="tc ck"><i class="ncb"></i></div></div>
        <div class="tr"><div class="tc l1"><i class="ex"></i>墙</div><div class="tc ck"><i class="cb"></i></div><div class="tc ck"><i class="ncb"></i></div></div>
        <div class="tr"><div class="tc l2">剪力墙</div><div class="tc ck"><i class="cb"></i></div><div class="tc ck"><i class="ncb"></i></div></div>
        <div class="tr"><div class="tc l2">人防门框墙</div><div class="tc ck"><i class="cb"></i></div><div class="tc ck"><i class="ncb"></i></div></div>
        <div class="tr"><div class="tc l2">砌体墙</div><div class="tc ck"><i class="cb"></i></div><div class="tc ck"><i class="ncb"></i></div></div>
        <div class="tr"><div class="tc l2">砌体加筋</div><div class="tc ck"><i class="cb"></i></div><div class="tc ck"><i class="ncb"></i></div></div>
        <div class="tr"><div class="tc l2">保温墙</div><div class="tc ck"><i class="cb"></i></div><div class="tc ck"><i class="ncb"></i></div></div>
        <div class="tr"><div class="tc l2">暗梁</div><div class="tc ck"><i class="cb"></i></div><div class="tc ck"><i class="ncb"></i></div></div>
        <div class="tr"><div class="tc l2">墙垛</div><div class="tc ck"><i class="cb"></i></div><div class="tc ck"><i class="ncb"></i></div></div>
        <div class="tr"><div class="tc l2 e">幕墙</div><div class="tc ck"><i class="cb"></i></div><div class="tc ck"><i class="ncb"></i></div></div>
        <div class="tr"><div class="tc l1"><i class="ex"></i>门窗洞</div><div class="tc ck"><i class="cb"></i></div><div class="tc ck"><i class="ncb"></i></div></div>
        <div class="tr"><div class="tc l2">门</div><div class="tc ck"><i class="cb"></i></div><div class="tc ck"><i class="ncb"></i></div></div>
        <div class="tr"><div class="tc l2">窗</div><div class="tc ck"><i class="cb"></i></div><div class="tc ck"><i class="ncb"></i></div></div>
        <div class="tr"><div class="tc l2">门联窗</div><div class="tc ck"><i class="cb"></i></div><div class="tc ck"><i class="ncb"></i></div></div>
        <div class="tr"><div class="tc l2">墙洞</div><div class="tc ck"><i class="cb"></i></div><div class="tc ck"><i class="ncb"></i></div></div>
        <div class="tr"><div class="tc l2">带形窗</div><div class="tc ck"><i class="cb"></i></div><div class="tc ck"><i class="ncb"></i></div></div>
        <div class="tr"><div class="tc l2">带形洞</div><div class="tc ck"><i class="cb"></i></div><div class="tc ck"><i class="ncb"></i></div></div>
        <div class="tr"><div class="tc l2">飘窗</div><div class="tc ck"><i class="cb"></i></div><div class="tc ck"><i class="ncb"></i></div></div>
        <div class="tr"><div class="tc l2">老虎窗</div><div class="tc ck"><i class="cb"></i></div><div class="tc ck"><i class="ncb"></i></div></div>
        <div class="tr"><div class="tc l2">过梁</div><div class="tc ck"><i class="cb"></i></div><div class="tc ck"><i class="ncb"></i></div></div>
        <div class="tr"><div class="tc l2 e">壁龛</div><div class="tc ck"><i class="cb"></i></div><div class="tc ck"><i class="ncb"></i></div></div>
        <div class="tr"><div class="tc l1"><i class="ex"></i>梁</div><div class="tc ck"><i class="cb"></i></div><div class="tc ck"><i class="ncb"></i></div></div>
        <div class="tr"><div class="tc l2">梁</div><div class="tc ck"><i class="cb"></i></div><div class="tc ck"><i class="ncb"></i></div></div>
        <div class="tr"><div class="tc l2">连梁</div><div class="tc ck"><i class="cb"></i></div><div class="tc ck"><i class="ncb"></i></div></div>
        <div class="tr"><div class="tc l2 e">圈梁</div><div class="tc ck"><i class="cb"></i></div><div class="tc ck"><i class="ncb"></i></div></div>
        <div class="tr"><div class="tc l1"><i class="ex"></i>板</div><div class="tc ck"><i class="cb"></i></div><div class="tc ck"><i class="ncb"></i></div></div>
        <div class="tr"><div class="tc l2">现浇板</div><div class="tc ck"><i class="cb"></i></div><div class="tc ck"><i class="ncb"></i></div></div>
      </div>
      <div class="sb">
        <i class="sb-up"></i>
        <i class="sb-th"></i>
        <i class="sb-dn"></i>
      </div>
    </div>
    <div class="rp-foot"><button class="reset" type="button">恢复默认设置</button></div>
  </aside>
</main>

<footer class="status">
  <span class="st st-xy">X = 48800 Y = 64431</span>
  <span class="st st-a">层高： 3.3</span>
  <span class="st st-b">标高： 0~3.3</span>
  <span class="st st-c">0</span>
  <span class="st st-d">隐藏：0</span>
  <span class="sbtn s1"><svg viewBox="0 0 14 14"><path d="M1 0v13h13M1 7h6v6" fill="none" stroke="#444" stroke-width="1.200"/></svg></span>
  <span class="sbtn s2"><svg class="s2-i" viewBox="0 0 16 16"><path d="M2.500 2.500h12v13h-12z" fill="#fff" stroke="#3f86d4"/><path d="M0 0h5v5H0z" fill="#f2964a"/></svg><i class="caret"></i></span>
  <span class="sbtn s3"><svg viewBox="0 0 16 16"><path d="M0 0l16 16M16 0L0 16" stroke="#888"/></svg></span>
  <span class="sbtn s4"><svg viewBox="0 0 16 16"><path d="M0 14h16M2 14L13 3" stroke="#333" stroke-width="1.200"/><circle cx="7" cy="9" r="1.500" fill="#333"/></svg><i class="caret"></i></span>
  <span class="sbtn s5"><svg viewBox="0 0 16 16"><path d="M3 1v8M0 4h7" stroke="#333" stroke-width="1.200"/><path d="M6 9h10v5H6z" fill="#333"/></svg><i class="caret"></i></span>
  <span class="sbtn s6">跨图层选择</span>
  <span class="sbtn s7">折线选择</span>
  <span class="st-tip">按鼠标左键指定第一个角点，或拾取构件图元</span>
  <span class="st-fps">142.857 FPS</span>
</footer>

<div class="taskbar">
  <i class="orb"></i><i class="dots"></i>
  <i class="tile t-a"></i><i class="tile t-b"></i><i class="tile t-c"></i><i class="tile t-d"></i><i class="tile t-e"></i><i class="tile t-f"></i>
  <span class="clock">下午 3:45</span><i class="showd"></i>
</div>

<div class="popup"><span class="pop-l"><svg viewBox="0 0 20 16"><circle cx="10" cy="5" r="3.600" fill="none" stroke="#fff" stroke-width="2.200"/><circle cx="5" cy="11" r="3.600" fill="none" stroke="#fff" stroke-width="2.200"/><circle cx="15" cy="11" r="3.600" fill="none" stroke="#fff" stroke-width="2.200"/></svg></span><span class="pop-r">拖拽上传</span></div>

<svg class="annot" viewBox="0 0 1920 1048" aria-hidden="true">
  <path class="an-rect" d="M5.500 110.500H125.500V232.500H5.500z"/>
  <path class="an-rect an-rect2" d="M531 340H1247V784H531z"/>
  <path class="an-fill" d="M177 226L200 237 193 241 333 415 189 247 182 250z"/>
  <path class="an-fill" d="M437 666L412 663 415 669 78 788 417 678 418 683z"/>
</svg>
</body>
</html>
```

FILE: styles.css
```css
* { box-sizing: border-box; }
html, body { margin: 0; padding: 0; }
body {
  width: 1920px; height: 1048px; overflow: hidden; position: relative;
  display: flex; flex-direction: column;
  font: 12px/16px "Noto Sans", "Noto Sans CJK SC", "Liberation Sans", sans-serif;
  color: #222; background: #f0f0f0;
}
i { display: block; font-style: normal; }
svg { display: block; flex: none; }
.sprite { position: absolute; width: 0; height: 0; }
.mini { font: 5px "Liberation Sans", sans-serif; fill: #2f6fb5; }
.mini3 { font: 9px "Liberation Sans", sans-serif; fill: #30383f; }

.caret { display: inline-block; width: 0; height: 0; border: 3.500px solid transparent; border-top: 4px solid #555; border-bottom: 0; margin-left: 6px; vertical-align: middle; flex: none; }
.caret-off { border-top-color: #c4c4c4; }

/* title area */
.top { height: 40px; display: flex; background: #fff; border-bottom: 1px solid #d4d6d8; flex: none; }
.logo { width: 47px; padding: 8px 0 0 9px; border-right: 1px solid #e4e4e4; display: flex; flex-direction: column; }
.logo-t { width: 28px; height: 28px; border-radius: 6px; background: linear-gradient(#45b8f2, #0b7fdc); color: #fff; font: bold 25px/28px "Liberation Sans", sans-serif; text-align: center; }
.logo-tri { width: 0; height: 0; border-left: 4px solid transparent; border-bottom: 4px solid #888; margin: -1px 0 0 29px; }
.top-main { flex: 1; display: flex; flex-direction: column; min-width: 0; }
.qbar { height: 22px; display: flex; align-items: center; padding-left: 7px; position: relative; }
.q { width: 16px; height: 16px; margin-right: 7px; }
.q-c { margin: 0 7px 0 -4px; border-top-color: #aaa; }
.q-c2 { margin-left: -2px; border-top-color: #666; }
.wintitle { position: absolute; left: 637px; top: 3px; white-space: nowrap; color: #222; letter-spacing: .22px; }
.winctl { margin-left: auto; display: flex; align-items: center; }
.w-min { width: 6px; height: 2px; background: #666; margin-right: 30px; margin-top: 3px; }
.w-res { width: 8px; height: 8px; border: 1.500px solid #666; margin-right: 26px; box-shadow: 2px -2px 0 -1px #fff, 3px -3px 0 -1px #666; }
.w-x { width: 9px; height: 9px; margin-right: 15px; }
.tabrow { height: 17px; display: flex; align-items: flex-start; padding-left: 3px; }
.tab { padding: 0 13px; height: 18px; line-height: 18px; color: #333; flex: none; position: relative; z-index: 1; }
.tab-on { background: #5ba8f0; color: #fff; border-radius: 2px 2px 0 0; }
.helpbar { margin-left: auto; display: flex; align-items: center; height: 18px; }
.search { width: 244px; height: 17px; border: 1px solid #ccc; padding: 0 6px 0 1px; line-height: 15px; font-size: 11px; color: #c0c0c0; white-space: nowrap; overflow: hidden; display: flex; align-items: center; justify-content: space-between; }
.s-mag { width: 11px; height: 11px; }
.user { width: 24px; margin: 0 30px 0 13px; white-space: nowrap; }
.h-i { width: 15px; height: 15px; margin-right: 9px; }
.h-bell { width: 13px; }
.h-q { color: #888; font: bold 16px/16px "Liberation Sans", sans-serif; width: 10px; }
.h-c { margin: 0 8px 0 0; border-top-color: #aaa; }
.h-last { margin-right: 3px; }

/* ribbon */
.ribbon { height: 99px; flex: none; display: flex; background: linear-gradient(#fff 0, #fff 48%, #e9ebec 100%); border-bottom: 1px solid #8e9092; }
.grp { display: flex; flex-direction: column; border-right: 1px solid #d7d9db; padding-left: 9px; }
.g-sel { width: 146px; padding-left: 8px; }
.g-cad { width: 194px; }
.g-gen { width: 275px; }
.g-mod { width: 237px; }
.g-draw { width: 119px; padding-left: 12px; }
.g-smart { width: 102px; padding-left: 8px; }
.g-body { height: 73px; display: flex; }
.g-label { flex: 1; display: flex; align-items: center; justify-content: center; color: #222; padding-right: 8px; }
.g-smart .g-label { padding: 3px 0 0 8px; justify-content: flex-start; }
.bigsel { width: 40px; height: 73px; padding-top: 2px; background: linear-gradient(#c3d8f0, #d5e2f1 70%, #e4eaf1); display: flex; flex-direction: column; align-items: center; margin-top: 6px; }
.bs-i { width: 30px; height: 30px; }
.bigsel span { margin-top: 5px; }
.col { display: flex; flex-direction: column; padding-top: 4px; }
.c-sel { margin-left: 5px; }
.c80 { width: 80px; }
.c66 { width: 66px; }
.c111 { width: 111px; }
.c54 { width: 54px; }
.rb { height: 23px; display: flex; align-items: center; white-space: nowrap; color: #222; }
.off, .rb.off { color: #c0c0c0; }
.ri { width: 16px; height: 16px; margin-right: 3px; }
.bigd { display: flex; flex-direction: column; align-items: center; padding-top: 8px; }
.d-pt { width: 30px; }
.d-ln { width: 30px; margin-left: 11px; }
.d-sm { margin-left: 10px; }
.d-sm .ri { margin: 0; }
.di { width: 30px; height: 30px; }
.bigd span { margin-top: 5px; white-space: nowrap; }
.d-c { margin: 8px 0 0; }

/* filters */
.filters { height: 29px; flex: none; display: flex; gap: 6px; padding: 3px 0 0 3px; background: #c8cbcf; border-bottom: 2px solid #8b8d90; }
.combo { width: 99px; height: 23px; background: #fff; border: 1px solid #d6d8da; padding: 0 3px 0 4px; display: flex; align-items: center; line-height: 21px; color: #222; }
.combo .caret { margin-left: auto; }

/* main */
.main { height: 842px; flex: none; display: flex; background: #f0f0f0; }
.nav { width: 208px; flex: none; margin-right: 4px; display: flex; flex-direction: column; background: #fff; border-right: 1px solid #bcbec2; border-left: 1px solid #bcbec2; border-bottom: 1px solid #bcbec2; }
.nav-h { height: 20px; background: #f0f0f0; border-bottom: 1px solid #c8c8c8; padding-left: 9px; color: #666; line-height: 22px; }
.nav-t { height: 31px; background: #f0f0f0; border-bottom: 1px solid #c8c8c8; display: flex; align-items: center; padding: 0 3px 0 9px; gap: 4px; }
.nav-plus { width: 10px; height: 10px; margin-right: auto; }
.nbtn { width: 25px; height: 24px; border: 1px solid #6bb0ef; border-radius: 4px; background: #e9f3fc; display: flex; align-items: center; justify-content: center; }
.nbtn svg { width: 16px; height: 16px; }
.tree { padding-top: 3px; flex: 1; }
.nr { height: 24px; display: flex; align-items: center; padding-left: 5px; padding-top: 2px; color: #222; white-space: nowrap; }
.fo { width: 15px; height: 15px; margin-right: 4px; margin-top: -2px; }
.ch { padding-left: 40px; padding-top: 0; }
.chi { display: flex; align-items: center; height: 21px; width: 104px; padding-left: 4px; padding-top: 2px; }
.sel { background: #c8d8ef; }
.nci { width: 16px; height: 16px; margin-right: 6px; margin-top: -2px; }

.mid { width: 286px; flex: none; display: flex; flex-direction: column; gap: 5px; }
.mp { border: 1px solid #bcbec2; border-top: 0; background: #fff; display: flex; flex-direction: column; }
.mp-a { height: 314px; }
.mp-b { flex: 1; }
.mp-bar { height: 11px; flex: none; background: #d3d5d9; display: flex; justify-content: flex-end; padding-right: 4px; }
.xx { font: bold 12px/11px "Liberation Sans", sans-serif; color: #777; }
.mp-tabs { height: 22px; flex: none; display: flex; background: #f0f0f0; border-bottom: 1px solid #c8c8c8; }
.mt { width: 65px; text-align: center; line-height: 24px; background: #d9d9d9; color: #666; border-right: 1px solid #ccc; }
.mt-on { background: #f0f0f0; color: #222; font-weight: 500; }
.mp-tool { height: 30px; flex: none; background: #f0f0f0; border-bottom: 1px solid #c8c8c8; display: flex; align-items: center; padding-left: 4px; white-space: nowrap; }
.ti { display: flex; align-items: center; padding-top: 1px; }
.ti .ri { margin-right: 3px; }
.t1 { width: 69px; }
.t2 { width: 57px; }
.t3 { width: 58px; }
.t4 { width: 81px; }
.more { width: 8px; height: 8px; margin-left: auto; margin-right: 4px; }
.mp-search { height: 20px; flex: none; display: flex; align-items: center; justify-content: space-between; padding: 1px 6px 0 2px; color: #888; border-bottom: 1px solid #c8c8c8; }
.mag { width: 12px; height: 12px; }
.mp-list { padding: 0 0 0 20px; flex: 1; }
.li-sel { display: block; width: 36px; height: 21px; line-height: 22px; padding-left: 3px; background: #c8d8ef; }

.pt { flex: 1; display: flex; flex-direction: column; }
.pt-row { display: grid; grid-template-columns: 21px 101px 119px 41px; height: 21px; }
.pt-row span { border-right: 1px solid #d4d4d4; border-bottom: 1px solid #d4d4d4; text-align: center; line-height: 23px; }
.pt-head span { background: #f0f0f0; color: #444; }
.pt-head span:first-child { background: #f4f6f9; }
.pt-one span:first-child { background: #f0f0f0; }
.pt-g { background: #ececec; }
.pt-rest { flex: 1; display: flex; }
.pt-rest span { width: 21px; background: #f0f0f0; }

.split { width: 4px; flex: none; background: #e6e6e6; padding-top: 372px; }
.split-w { background: #fff; }
.split-h { width: 4px; height: 100px; background: #555e66; }

.canvas { width: 1131px; flex: none; background: #000; position: relative; overflow: hidden; }
.cad { position: absolute; left: 0; top: 0; width: 1131px; height: 842px; }
.b-hi { fill: #7a10d6; stroke: #ff6cc4; stroke-width: 8; }
.b-lo { fill: #3c0f6e; stroke: #8f3a7e; stroke-width: 10; }
.hi-line { stroke: #ff6cc4; stroke-width: 3; fill: none; }
.grid { fill: none; stroke: #e80000; stroke-width: 3; }
.grid-d { fill: none; stroke: #7a0010; stroke-width: 3; }
.wh-dots { stroke: #e8e0e8; stroke-width: 4; fill: none; }
.t text { font: 48px "Liberation Sans", sans-serif; fill: #f2f2f2; }
.t .m { text-anchor: middle; }
.b-far { fill: #3c0f6e; stroke: #8a2c66; stroke-width: 2.500; }
.b-dash { fill: none; stroke: #14082a; stroke-width: 1; stroke-dasharray: 6 2; }
.b-in { stroke: #7a2a62; fill: none; }
.b-ye { fill: none; stroke: #a08020; }
.ax-g { fill: #00e010; }
.ax-r { fill: #f00; }
.ax-b { fill: #0a10b0; }
.ax-y { font: 16px "Liberation Sans", sans-serif; fill: #00e010; text-anchor: middle; }
.ax-x { font: 16px "Liberation Sans", sans-serif; fill: #f00; text-anchor: middle; }
.vtools { position: absolute; left: 1095px; top: 3px; width: 33px; height: 227px; background: #a9acb1; border: 1px solid #c4c6c9; display: flex; flex-direction: column; align-items: center; padding-top: 10px; }
.vi { width: 24px; height: 24px; margin-bottom: 6px; }
.v-c { margin: -2px 0 6px; border-top-color: #444; }
.v-sep { width: 24px; height: 1px; background: #777; margin: 1px 0 4px; }

.rp { flex: 1; border-left: 1px solid #bcbec2; border-bottom: 1px solid #bcbec2; display: flex; flex-direction: column; background: #f0f0f0; }
.rp-title { height: 23px; flex: none; border-bottom: 1px solid #c8c8c8; padding-left: 8px; line-height: 24px; color: #666; }
.rp-tabs { height: 31px; flex: none; padding: 5px 0 0 3px; display: flex; align-items: flex-end; gap: 2px; border-bottom: 1px solid #c8c8c8; }
.rt { width: 60px; height: 23px; text-align: center; line-height: 24px; background: #dedede; color: #666; border-radius: 3px 3px 0 0; }
.rt-on { height: 26px; line-height: 28px; background: #fff; color: #3f95ee; border: 1px solid #c8c8c8; border-bottom: 0; }
.lt-wrap { margin: 3px 0 0 2px; height: 735px; width: 277px; flex: none; display: flex; border: 1px solid #c8c8c8; border-top: 0; background: #fff; }
.lt { width: 260px; flex: none; }
.tr { height: 21px; display: grid; grid-template-columns: 134px 63px 63px; }
.tc { border-right: 1px solid #d4d4d4; border-bottom: 1px solid #d4d4d4; display: flex; align-items: center; white-space: nowrap; color: #222; }
.tc:not(.ck) { padding-top: 2px; }
.tc .ex { margin-top: -2px; }
.th { height: 20px; background: #f0f0f0; }
.th .tc { justify-content: center; color: #444; background: #f0f0f0; }
.th .hb { background: #6cb0f5; color: #eaf4ff; }
.ck { justify-content: center; }
.cur { border: 2px solid #8a8a8a; border-top: 0; border-left-width: 1px; }
.l0 { padding-left: 3px; }
.l1 { padding-left: 13px; background: linear-gradient(#d0d0d0, #d0d0d0) 9px 0 / 1px 100% no-repeat; }
.l2 { padding-left: 41px; background:
  linear-gradient(#d0d0d0, #d0d0d0) 9px 0 / 1px 100% no-repeat,
  linear-gradient(#c8c8c8, #c8c8c8) 18px 0 / 1px 100% no-repeat,
  linear-gradient(#c8c8c8, #c8c8c8) 18px 10px / 16px 1px no-repeat; }
.l2.e { background:
  linear-gradient(#d0d0d0, #d0d0d0) 9px 0 / 1px 100% no-repeat,
  linear-gradient(#c8c8c8, #c8c8c8) 18px 0 / 1px 10px no-repeat,
  linear-gradient(#c8c8c8, #c8c8c8) 18px 10px / 16px 1px no-repeat; }
.ex { width: 13px; height: 13px; border: 1px solid #888; border-radius: 2px; background: linear-gradient(#777, #777) center / 5px 1px no-repeat, #fff; margin-right: 5px; flex: none; }
.ex-d { border-color: #555; }
.cb { width: 14px; height: 14px; border-radius: 2px; background: #5aa5f5; position: relative; }
.cb::after { content: ""; position: absolute; left: 3px; top: 3px; width: 8px; height: 4px; border-left: 2px solid #fff; border-bottom: 2px solid #fff; transform: rotate(-45deg); }
.ncb { width: 14px; height: 14px; border-radius: 2px; border: 1px solid #8e8e8e; background: #fff; }
.dis { border-color: #c8c8c8; background: #efefef; }
.sb { flex: 1; display: flex; flex-direction: column; align-items: center; padding: 4px 0 3px; background: #fff; }
.sb-up { width: 0; height: 0; border: 4px solid transparent; border-bottom: 5px solid #222; border-top: 0; }
.sb-th { width: 8px; height: 225px; margin-top: 1px; background: #c8cacd; border-radius: 4px; }
.sb-dn { width: 0; height: 0; border: 4px solid transparent; border-top: 5px solid #222; border-bottom: 0; margin-top: auto; }
.rp-foot { flex: 1; display: flex; justify-content: flex-end; align-items: flex-start; padding: 7px 8px 0 0; }
.reset { width: 90px; height: 26px; border: 1px solid #c4c8cf; border-radius: 4px; background: #f4f4f4; font: inherit; color: #444; padding: 0; }

/* status */
.status { height: 30px; flex: none; display: flex; align-items: center; padding-top: 2px; background: #dcdcdf; color: #444; white-space: nowrap; border-bottom: 1px solid #fff; }
.st-xy { width: 265px; padding-left: 2px; word-spacing: 2.400px; }
.st-a { width: 83px; }
.st-b { width: 133px; }
.st-c { width: 103px; }
.st-d { width: 103px; }
.sbtn { height: 25px; border: 1px solid #9d9d9d; border-width: 1.500px; background: #d4d4d6; display: flex; align-items: center; justify-content: center; margin-right: 3px; color: #444; flex: none; }
.sbtn svg { width: 16px; height: 16px; }
.sbtn .caret { margin-left: 6px; }
.s1 { width: 25px; }
.s2 { width: 35px; background: #fff; border-color: #3f95ee; margin-right: 7px; }
.s2-i { margin-left: 1px; }
.s3 { width: 25px; border-color: #bbb; background: #ccc; }
.s4 { width: 36px; margin-right: 4px; }
.s5 { width: 36px; }
.s6 { width: 72px; }
.s7 { width: 60px; }
.st-tip { margin-left: 4px; color: #333; }
.st-fps { margin-left: auto; padding-right: 13px; }

/* taskbar */
.taskbar { flex: 1; display: flex; align-items: flex-start; padding-top: 1px; background: linear-gradient(90deg, #2a2426 0, #2b2527 30%, #4d4650 50%, #a9a8d0 62%, #7f83ac 85%, #5a5f85 100%); overflow: hidden; }
.orb { width: 29px; height: 14px; border-radius: 50%; background: #8fb8dc; margin: 1px 0 0 12px; }
.dots { width: 23px; height: 14px; background: radial-gradient(circle at 30% 60%, #a8d020 0 5px, transparent 5px), radial-gradient(circle at 75% 60%, #3aa0e8 0 5px, transparent 5px); margin: 3px 0 0 32px; }
.tile { height: 14px; margin-right: 12px; background: #8d8588; border-radius: 2px 2px 0 0; }
.t-a { width: 49px; margin-left: 24px; }
.t-b { width: 53px; }
.t-c { width: 57px; }
.t-d { width: 50px; }
.t-e { width: 57px; }
.t-f { width: 58px; background: #dfe6ef; }
.clock { margin-left: auto; color: #fff; line-height: 20px; margin-top: 1px; }
.showd { width: 13px; height: 14px; margin-left: 30px; background: #6a6e90; border: 1px solid #9da0bd; }

/* overlays */
.popup { position: absolute; left: 1709px; top: 28px; width: 103px; height: 25px; border: 1px solid #1e9bf5; border-radius: 3px; display: flex; overflow: hidden; }
.pop-l { width: 30px; background: #1e9bf5; display: flex; align-items: center; justify-content: center; }
.pop-l svg { width: 20px; height: 16px; }
.pop-r { flex: 1; background: linear-gradient(#e3f4ff, #c5e8ff); color: #5aa9e6; text-align: center; line-height: 23px; }
.annot { position: absolute; left: 0; top: 0; width: 1920px; height: 1048px; pointer-events: none; }
.an-rect { fill: none; stroke: #fb3a3a; stroke-width: 7; }
.an-rect2 { stroke-width: 6; }
.an-fill { fill: #fb3a3a; }
```
